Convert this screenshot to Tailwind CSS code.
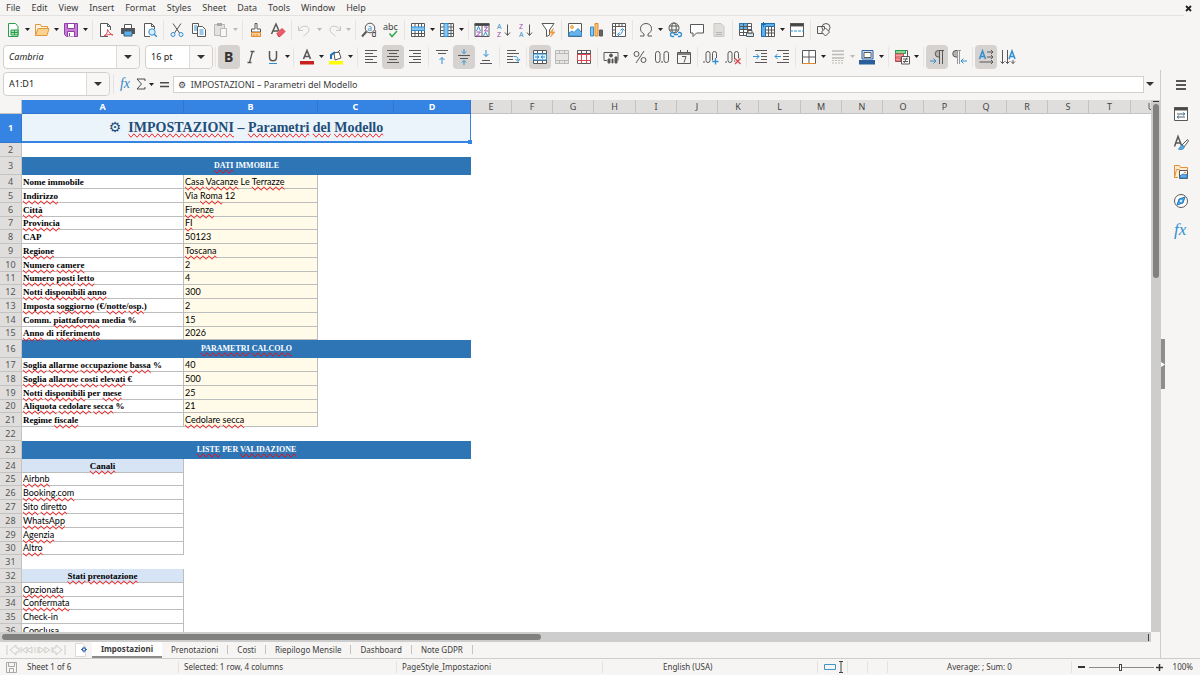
<!DOCTYPE html>
<html lang="en">
<head>
  <meta charset="UTF-8" />
  <meta name="viewport" content="width=device-width, initial-scale=1.0"/>
  <title>Impostazioni</title>
  <script src="https://cdn.jsdelivr.net/npm/@tailwindcss/browser@4"></script>
</head>
<body class="flex flex-col h-screen overflow-hidden bg-[#f6f5f3] text-[#3b3b3b] font-['Noto_Sans',sans-serif] text-[8px] leading-3">

  <!-- Menu bar -->
  <header class="flex items-center h-4 shrink-0 pr-4">
    <nav id="menu" class="flex items-center h-full grow border-b border-[#e3e2e0] pl-[6px] text-[9px] gap-[11px]"></nav>
    <button aria-label="Close document" class="w-0 flex justify-center"><svg class="w-[7px] h-[7px] shrink-0 ml-2" viewBox="0 0 7 7" fill="none" stroke="#222" stroke-width="1.8"><path d="M1 1l5 5M6 1l-5 5"/></svg></button>
  </header>

  <!-- Toolbars -->
  <div id="standard" class="flex items-center h-[27px] shrink-0 pl-[2px]"></div>
  <div class="flex items-center h-[27px] shrink-0 pl-[3px]">
    <div class="flex h-6 w-[137px] mr-[5px] bg-white border border-[#d2d0cd] rounded">
      <input aria-label="Font name" value="Cambria" class="grow min-w-0 w-0 pl-[5px] italic text-[9px] text-[#222] outline-none">
      <button aria-label="Font list" class="w-[23px] shrink-0 flex items-center justify-center bg-[#f8f7f6] border-l border-[#dddbd9] rounded-r"><svg class="w-2 h-1" viewBox="0 0 8 4"><path d="M0 0h8L4 4z" fill="#333"/></svg></button>
    </div>
    <div class="flex h-6 w-[68px] bg-white border border-[#d2d0cd] rounded">
      <input aria-label="Font size" value="16 pt" class="grow min-w-0 w-0 pl-[5px] text-[9px] text-[#222] outline-none">
      <button aria-label="Font size list" class="w-[23px] shrink-0 flex items-center justify-center bg-[#f8f7f6] border-l border-[#dddbd9] rounded-r"><svg class="w-2 h-1" viewBox="0 0 8 4"><path d="M0 0h8L4 4z" fill="#333"/></svg></button>
    </div>
    <div id="formatting" class="flex items-center"></div>
  </div>

  <div class="flex grow min-h-0">
    <main class="flex flex-col grow min-w-0 border-r border-[#cfcdcb]">
      <!-- Formula bar -->
      <div class="flex items-center h-[30px] shrink-0 pl-[3px] pb-[2px] pr-1">
        <div class="flex h-6 w-[107px] bg-white border border-[#d2d0cd] rounded">
          <input aria-label="Name box" value="A1:D1" class="grow min-w-0 w-0 pl-[5px] text-[9px] text-[#222] outline-none">
          <button aria-label="Named ranges" class="w-[23px] shrink-0 flex items-center justify-center bg-[#f8f7f6] border-l border-[#dddbd9] rounded-r"><svg class="w-2 h-1" viewBox="0 0 8 4"><path d="M0 0h8L4 4z" fill="#333"/></svg></button>
        </div>
        <div class="w-px h-5 bg-[#e3e2e0] ml-[3px]"></div>
        <button aria-label="Function wizard" class="w-[22px] text-[14px] italic text-[#2f86c9] font-['Liberation_Serif',serif]">fx</button>
        <button aria-label="Select function" class="flex items-center w-[22px] gap-[3px]">
          <svg class="w-[10px] h-3" viewBox="0 0 10 12" fill="none" stroke="#4a4a4a"><path d="M9 3V1H1l4.500 5L1 11h8V9"/></svg>
          <svg class="w-[5px] h-[3px]" viewBox="0 0 5 3"><path d="M0 0h5L2.500 3z" fill="#222"/></svg>
        </button>
        <button aria-label="Formula" class="flex items-center w-[15px] pl-[2px]"><svg class="w-[9px] h-[7px]" viewBox="0 0 9 7"><path d="M0 1h9v1.500H0zM0 4.800h9v1.500H0z" fill="#4a4a4a"/></svg></button>
        <input aria-label="Input line" value="⚙  IMPOSTAZIONI – Parametri del Modello" class="grow min-w-0 h-[17px] pl-1 bg-white border border-[#d2d0cd] text-[9px] outline-none">
        <button aria-label="Expand formula bar" class="w-3 flex justify-center"><svg class="w-2 h-1" viewBox="0 0 8 4"><path d="M0 0h8L4 4z" fill="#333"/></svg></button>
      </div>

      <!-- Cells -->
      <div class="flex grow min-h-0">
        <div class="grow min-w-0 overflow-hidden bg-white">
          <table class="w-[1172px] table-fixed border-separate border-spacing-0 text-black">
            <colgroup id="cols"><col class="w-[22px]"><col class="w-[162px]"><col class="w-[134px]"><col class="w-[76px]"><col class="w-[77px]"></colgroup>
            <thead><tr id="colHeads" class="h-[14px]"><td class="bg-[#f6f5f3] border-r border-b border-[#c4c3c1]"></td></tr></thead>
            <tbody id="rows"></tbody>
          </table>
        </div>
        <div class="flex flex-col items-center w-[9px] shrink-0 bg-[#cdcdcd]">
          <div class="w-[6px] h-px mt-px bg-[#333]"></div>
          <div class="w-[6px] h-[174px] mt-[2px] rounded-full bg-[#80807e]"></div>
        </div>
      </div>
      <div class="flex items-center h-[10px] shrink-0 mr-[9px] pl-[2px] pr-[2px] bg-[#cdcdcd]">
        <div class="w-[47%] h-[6px] rounded-full bg-[#80807e]"></div>
        <div class="w-px h-[7px] ml-auto bg-[#444]"></div>
      </div>

      <!-- Sheet tabs -->
      <div class="flex items-center h-4 shrink-0">
        <svg class="w-[60px] h-3 ml-[6px]" viewBox="0 0 60 12" fill="none" stroke="#cfcdca"><path d="M1 1v10M10 1L4 6l6 5V8h3V4h-3zM15 3v6M21 3l-5 3 5 3zM26 3l-5 3 5 3zM29 3v6M32 3v6M33 3l5 3-5 3zM39 3l5 3-5 3zM46 3v6M50 1l6 5-6 5V8h-3V4h3zM59 1v10"/></svg>
        <button aria-label="Add sheet" class="ml-2 mr-1"><svg class="w-[14px] h-[14px]" viewBox="0 0 14 14"><path d="M1.500.5h7l3 3v10h-10z" fill="#fff" stroke="#dcdad7"/><circle cx="10" cy="6.500" r="1.600" fill="none" stroke="#2b63ad" stroke-width="1.200"/><path d="M10 3.500v1M10 8.500v1M7 6.500h1M12 6.500h1" stroke="#2b63ad"/></svg></button>
        <button class="h-4 w-[70px] bg-white border-b-2 border-[#8c8b89] font-bold">Impostazioni</button>
        <div id="tabs" class="flex items-center mb-[2px]"></div>
      </div>
    </main>

    <!-- Sidebar -->
    <aside class="flex w-[39px] shrink-0">
      <div class="flex items-center w-1 h-[50px] mt-[269px] bg-[#8f8e8d]"><svg class="w-1 h-[5px]" viewBox="0 0 4 5"><path d="M0 0l4 2.500L0 5z" fill="#fff"/></svg></div>
      <div id="sidebar" class="flex flex-col items-center w-8 pt-[7px] gap-[13px]"></div>
    </aside>
  </div>

  <!-- Status bar -->
  <footer class="grid grid-cols-[178fr_218fr_206fr_215fr_30px_20px_20px_184fr_129px] items-center h-[17px] shrink-0 border-t border-[#cfcdcb] *:h-3">
    <div class="flex items-center pl-[6px] gap-[10px]"><svg class="w-[11px] h-[11px]" viewBox="0 0 11 11" fill="none" stroke="#a9a8a6"><path d="M.5.5h10v10H.5zM2.500.5v4h6v-4M3.500 10.500v-4h4v4"/></svg>Sheet 1 of 6</div>
    <div class="border-l border-[#e3e2e0] pl-[5px]">Selected: 1 row, 4 columns</div>
    <div class="border-l border-[#e3e2e0] pl-[5px]">PageStyle_Impostazioni</div>
    <div class="border-l border-[#e3e2e0] pl-[60px]">English (USA)</div>
    <div class="flex items-center border-l border-[#e3e2e0] pl-[6px]"><svg class="w-5 h-3" viewBox="0 0 20 12" fill="none"><path d="M.5 3.500h11v5H.5z" stroke="#3f93c6"/><path d="M15 .5h4M15 11.500h4M17 1v10" stroke="#444"/></svg></div>
    <div class="border-l border-[#e3e2e0]"></div>
    <div class="border-l border-[#e3e2e0]"></div>
    <div class="border-l border-[#e3e2e0] text-center">Average: ; Sum: 0</div>
    <div class="flex items-center border-l border-[#e3e2e0] pl-[6px]">
      <button aria-label="Zoom out" class="w-[7px] h-[2px] bg-[#333]"></button>
      <input type="range" min="0" max="100" value="48" aria-label="Zoom" class="appearance-none w-[65px] h-2 ml-1 bg-transparent [&::-webkit-slider-runnable-track]:h-px [&::-webkit-slider-runnable-track]:bg-[#8a8a8a] [&::-webkit-slider-thumb]:appearance-none [&::-webkit-slider-thumb]:w-[3px] [&::-webkit-slider-thumb]:h-[7px] [&::-webkit-slider-thumb]:-mt-[3px] [&::-webkit-slider-thumb]:border [&::-webkit-slider-thumb]:border-[#444] [&::-webkit-slider-thumb]:bg-white">
      <button aria-label="Zoom in" class="ml-[2px]"><svg class="w-[7px] h-[7px]" viewBox="0 0 7 7"><path d="M0 3.500h7M3.500 0v7" stroke="#333" stroke-width="1.500"/></svg></button>
      <button class="ml-auto mr-[7px]">100%</button>
    </div>
  </footer>

  <script>
    // 16x16 icon bodies, default stroke comes from the svg element
    const icons = {
      "New": '<path d="M3.500 1.500h7l2.500 3v10H3.500z" fill="#fff" stroke="#2a9d4a"/><path d="M6 8h7v5H6zM6 10.500h7M9.500 8v5" fill="#a9e0b5" stroke="#2a9d4a"/>',
      "Open": '<path d="M1.500 13.500v-11h5l1 2h6v3" fill="#fff3dc" stroke="#e0983c"/><path d="M1.500 13.500L4 6.500h11l-2 7z" fill="#fbd38f" stroke="#e0983c"/>',
      "Save": '<path d="M1.500 1.500h13v13h-11l-2-2z" fill="#c77fd6" stroke="#8f3fa5"/><path d="M4.500 1.500h7v5h-7zM4.500 14.500v-5h7v5" fill="#fff" stroke="#8f3fa5"/><path d="M6.500 11v3" stroke="#8f3fa5"/>',
      "Export PDF": '<path d="M10 14.500H2.500v-13h7l3 3V8" fill="#fff"/><path d="M9.500 1.500v3h3"/><path d="M6 14c2-1 4-4 3.500-6.500C11 11 13 12 15 13c-3-1-6-.5-9 1z" stroke="#e0454f"/>',
      "Print": '<path d="M4.500 6V2.500h7V6" fill="#fff"/><path d="M1 6h14v6H1z" fill="#555" stroke="none"/><path d="M4 9h8v5H4z" fill="#5fb0ea" stroke="#37607e"/>',
      "Print Preview": '<path d="M8 14.500H2.500v-13h7l3 3V7" fill="#fff"/><path d="M9.500 1.500v3h3"/><circle cx="10" cy="10" r="3.200" fill="#d8ecfa" stroke="#2f8fd0"/><path d="M12.300 12.300l2.500 2.500" stroke="#2f8fd0" stroke-width="1.500"/>',
      "Cut": '<path d="M4 1.500l6.500 9.500M12 1.500L5.500 11"/><circle cx="4" cy="12.500" r="2" stroke="#2f8fd0"/><circle cx="12" cy="12.500" r="2" stroke="#2f8fd0"/>',
      "Copy": '<path d="M6 11.500H1.500v-10h6V4" fill="#fff"/><path d="M6.500 4.500h5l3 3v7h-8z" fill="#fff"/><path d="M3 4h3M3 6h3M3 8h3M8.500 8h4M8.500 10h4M8.500 12h4" stroke="#2f8fd0"/>',
      "Paste": '<path d="M8 13.500H1.500v-11h10V6" fill="#e4e2e0" stroke="#bbb9b6"/><path d="M4 1h5v3H4z" fill="#aaa8a5" stroke="none"/><path d="M7.500 6.500h6v8h-6z" fill="#f8f7f6" stroke="#bbb9b6"/>',
      "Clone Formatting": '<path d="M7 1.500h2V7h3.500v3h-9V7H7z" fill="#fff"/><path d="M3.500 10.500h9v4h-9z" fill="#fbd09a" stroke="#e58a2b"/><path d="M6 12v2M9 12v2" stroke="#e58a2b"/>',
      "Clear Formatting": '<path d="M1.500 12L6 2l3 7M3 9h5" stroke-width="1.500"/><path d="M7 11.500l5-5 3 3-5 5H8.500z" fill="#ee5c67" stroke="#d33a48"/>',
      "Undo": '<path d="M1.500 4v4.500H6M2 8c2-5 10-5 10-.500 0 3-3 4.500-5.500 6.500" stroke="#c9c7c4"/>',
      "Redo": '<path d="M14.500 4v4.500H10M14 8C12 3 4 3 4 7.500c0 3 3 4.500 5.500 6.500" stroke="#c9c7c4"/>',
      "Find": '<circle cx="9" cy="6" r="4.800"/><path d="M5.500 9.500L1 14.500" stroke-width="2"/><text x="6.500" y="8.500" font-size="8" fill="#2f8fd0" stroke="none">a</text><text x="10.500" y="15" font-size="8" fill="#333" stroke="none">d</text>',
      "Spelling": '<text x="0" y="8" font-size="9" fill="#444" stroke="none">abc</text><path d="M6.500 11.500l2.500 3 5-5.500" stroke="#33a852" stroke-width="1.500"/>',
      "Row": '<path d="M1.500 1.500h13v13h-13z" fill="#fff"/><path d="M1.500 11.500h13M5 1.500v13M8.500 1.500v13M11.500 1.500v13"/><path d="M1.500 5h13v3.500h-13z" fill="#8cc6f0" stroke="#2f8fd0"/>',
      "Column": '<path d="M1.500 1.500h13v13h-13z" fill="#fff"/><path d="M1.500 5h13M1.500 8.500h13M1.500 11.500h13M12 1.500v13"/><path d="M5 1.500h4v13H5z" fill="#8cc6f0" stroke="#2f8fd0"/>',
      "Sort": '<path d="M1 1.500h14v13H1z" fill="#fff"/><path d="M1 1.500h14v2H1z" fill="#444"/><path d="M8 3v12"/><path d="M2.500 9L4.500 4.500 6.500 9M9.500 14l2-4 2 4" stroke="#2f8fd0"/><path d="M10 5h3.500l-3 4h3.500M2.500 10h4l-4 4h4" stroke="#a349b8"/>',
      "Sort Ascending": '<text x="1" y="7" font-size="7" fill="#2f8fd0" stroke="none">A</text><text x="1" y="15" font-size="7" fill="#a349b8" stroke="none">Z</text><path d="M11.500 2.500V13M9 10.500l2.500 3 2.500-3"/>',
      "Sort Descending": '<text x="1" y="7" font-size="7" fill="#a349b8" stroke="none">Z</text><text x="1" y="15" font-size="7" fill="#2f8fd0" stroke="none">A</text><path d="M11.500 2.500V13M9 10.500l2.500 3 2.500-3"/>',
      "AutoFilter": '<path d="M2 1.500h12L9.500 8v5L6.500 14.500V8z" fill="#fff"/><path d="M13.500 6.500L9.500 11h3l-2 4 4.500-5h-3z" fill="#f6a34a" stroke="#e58a2b" stroke-width=".6"/>',
      "Image": '<path d="M1.500 1.500h13v13h-13z" fill="#fff"/><circle cx="5" cy="5" r="1.500" fill="#fbc27a" stroke="#e58a2b" stroke-width=".7"/><path d="M2 13v-2l3-2 2 1.500L11 6.500l3.500 4V14H2z" fill="#69b3ea" stroke="#2f8fd0"/>',
      "Chart": '<path d="M1.500 5h3v9h-3z" fill="#8cc6f0" stroke="#2f8fd0"/><path d="M6 1.500h3V14H6z" fill="#fbc27a" stroke="#e58a2b"/><path d="M10.500 8h3v6h-3z" fill="#666"/>',
      "Pivot Table": '<path d="M1.500 1.500h13v13h-13z" fill="#fff"/><path d="M4.500 1.500v13M1.500 4.500h13M8 1.500v3M11 1.500v3M1.500 8h3M1.500 11h3"/><path d="M7.500 12.500c3 0 4-2 4-5M9.500 8.500l2-2 2 2M8.500 10.500l-2 2 2 2" stroke="#2f8fd0"/>',
      "Special Character": '<path d="M2 14h4v-2C3.500 10.500 2.500 9 2.500 6.500 2.500 3.500 5 1.500 8 1.500s5.500 2 5.500 5c0 2.500-1 4-3.500 5.500v2h4"/>',
      "Hyperlink": '<circle cx="7" cy="6" r="5"/><ellipse cx="7" cy="6" rx="2.200" ry="5"/><path d="M2.500 4h9M2.500 8h9"/><path d="M7 10.500H5.500a2 2 0 000 4H7M11 10.500h1.500a2 2 0 010 4H11M7 12.500h4" stroke="#2f8fd0" stroke-width="1.300"/>',
      "Comment": '<path d="M1.500 2.500h13v8.500H7.500L4 14.500V11H1.500z" fill="#fff"/>',
      "Headers and Footers": '<path d="M3 1.500h7l3 3v10H3z" fill="#e0dedb" stroke="#c9c7c4"/><path d="M5 10.500h6M5 12.500h6" stroke="#b7b5b2"/>',
      "Print Area": '<path d="M1.500 1.500h12v12h-12z" fill="#fff"/><path d="M1.500 1.500h8v6h-8z" fill="#5fb0ea" stroke="#2b7dbb"/><path d="M1.500 4.500h12M5.500 1.500v12M9.500 1.500v12M1.500 7.500h12M1.500 10.500h12"/><path d="M8.500 11h7v3.500h-7z" fill="#cfe6f7"/><path d="M10 8.500h4V11h-4z" fill="#fff"/>',
      "Freeze": '<path d="M1.500 1.500h13v13h-13z" fill="#fff"/><path d="M1.500 1.500h13v3h-9v10h-4z" fill="#5fb0ea" stroke="#1f6fae"/><path d="M8.500 4.500v10M11.500 4.500v10M5.500 8h9M5.500 11h9"/><path d="M3.500 0v5M1 2.500h5" stroke="#1f6fae"/>',
      "Split Window": '<path d="M1.500 1.500h13v13h-13z" fill="#fff"/><path d="M1.500 1.500h13v2.500h-13z" fill="#444"/><path d="M1 9h14" stroke="#2f8fd0" stroke-dasharray="3 1"/>',
      "Draw Functions": '<path d="M1.500 4.500h7v7h-7z"/><circle cx="10" cy="5.500" r="4"/><path d="M9.500 6l4 4-4 4-4-4z" fill="#f6f5f3"/>',
      "Bold": '<text x="3" y="13" font-size="14" font-weight="700" fill="#333" stroke="none">B</text>',
      "Italic": '<path d="M7.500 2.500h4M4.500 13.500h4M9.500 2.500l-3 11" stroke-width="1.300"/>',
      "Underline": '<path d="M4.500 2v6c0 5 7 5 7 0V2" stroke-width="1.500"/><path d="M4 14.500h8" stroke="#2f8fd0"/>',
      "Font Color": '<path d="M4.500 10L8 1.500 11.500 10M6 7.500h4" stroke-width="1.600"/><path d="M1 12h14v3.500H1z" fill="#c9211e" stroke="none"/>',
      "Highlighting": '<path d="M6 4l5-1 2 6-6 2z" fill="#fff"/><path d="M3 10V6l4-3" stroke="#1f6fae" stroke-width="2"/><path d="M9 4l3-3"/><path d="M1 12h14v3.500H1z" fill="#ffff00" stroke="none"/>',
      "Align Left": '<path d="M2 1.500h12M2 4.500h8M2 7.500h12M2 10.500h8M2 13.500h12"/>',
      "Align Center": '<path d="M2 1.500h12M4 4.500h8M2 7.500h12M4 10.500h8M2 13.500h12"/>',
      "Align Right": '<path d="M2 1.500h12M6 4.500h8M2 7.500h12M6 10.500h8M2 13.500h12"/>',
      "Align Top": '<path d="M2 1.500h12M4 4.500h8"/><path d="M8 15V8.500M5.500 11L8 8.500l2.500 2.500" stroke="#2f8fd0"/>',
      "Center Vertically": '<path d="M2 6.500h12M4 9.500h8"/><path d="M8 0v4.500M6 2.500l2 2 2-2M8 16v-4.500M6 13.500l2-2 2 2" stroke="#2f8fd0"/>',
      "Align Bottom": '<path d="M2 14.500h12M4 11.500h8"/><path d="M8 1v6.500M5.500 5L8 7.500 10.500 5" stroke="#2f8fd0"/>',
      "Wrap Text": '<path d="M2 1.500h9M2 4.500h12M2 7.500h6M2 10.500h6M2 13.500h12"/><path d="M8.500 7.500h2c2 0 2.500 1.500 2.500 4M10.500 10l2.500 2.500L15 10" stroke="#2f8fd0"/>',
      "Merge and Center": '<path d="M1.500 1.500h13v13h-13z" fill="#fff"/><path d="M1.500 4.500h13M1.500 11.500h13M5.500 1.500v3M10.500 1.500v3M5.500 11.500v3M10.500 11.500v3"/><path d="M1.500 5h13v6h-13z" fill="#e3f1fb" stroke="#2f8fd0"/><path d="M3 8h4M9 8h4M5 6.500L7 8l-2 1.500M11 6.500L9 8l2 1.500" stroke="#2f8fd0"/>',
      "Merge Cells": '<path d="M1.500 1.500h13v13h-13z" fill="#e8e6e4" stroke="#bbb9b6"/><path d="M1.500 4.500h13M1.500 11.500h13M5.500 1.500v3M10.500 1.500v3M5.500 11.500v3M10.500 11.500v3" stroke="#bbb9b6"/>',
      "Unmerge Cells": '<path d="M1.500 1.500h13v13h-13z" fill="#fff"/><path d="M1.500 4.500h13M5.500 1.500v3M10.500 1.500v3"/><path d="M1.500 5.500h13v6h-13zM5.500 5.500v9M10.500 5.500v9" stroke="#dd4b50"/>',
      "Currency": '<path d="M1 3.500h14v8M1 3.500v8h3"/><circle cx="8" cy="6.500" r="1.500" fill="#555"/><path d="M5 10h2v4H5zM9 10h1v4H9zM12 8h2v6h-2z" fill="#555"/>',
      "Percent": '<circle cx="4.500" cy="5" r="2.500"/><circle cx="11.500" cy="11" r="2.500"/><path d="M12 2L4 14"/>',
      "Number": '<rect x="1.500" y="2.500" width="4.500" height="11" rx="2.200"/><path d="M8 12v2"/><rect x="10" y="2.500" width="4.500" height="11" rx="2.200"/>',
      "Date": '<path d="M1.500 3.500h13v11h-13zM4.500 1v3M11.500 1v3"/><path d="M1.500 5h13" stroke-width="1.500"/><path d="M6 7.500h4l-2 6"/>',
      "Add Decimal": '<path d="M1 12v2"/><rect x="3" y="2.500" width="4" height="11" rx="2"/><rect x="9.500" y="2.500" width="4" height="11" rx="2"/><path d="M12.500 9v6.500M9.500 12.500h6" stroke="#f6f5f3" stroke-width="3"/><path d="M12.500 9v6.500M9.500 12.500h6" stroke="#2f8fd0" stroke-width="1.300"/>',
      "Delete Decimal": '<path d="M1 12v2"/><rect x="3" y="2.500" width="4" height="11" rx="2"/><rect x="9.500" y="2.500" width="4" height="11" rx="2"/><path d="M10 9.500l5.500 5.500M15.500 9.500L10 15" stroke="#f6f5f3" stroke-width="3"/><path d="M10 9.500l5.500 5.500M15.500 9.500L10 15" stroke="#e0454f" stroke-width="1.300"/>',
      "Increase Indent": '<path d="M3 1.500h12M9 4.500h6M9 7.500h6M9 10.500h6M3 13.500h12"/><path d="M1 7.500h6M4.500 5L7 7.500 4.500 10" stroke="#2f8fd0"/>',
      "Decrease Indent": '<path d="M3 1.500h12M9 4.500h6M9 7.500h6M9 10.500h6M3 13.500h12"/><path d="M1 7.500h6M3.500 5L1 7.500 3.500 10" stroke="#2f8fd0"/>',
      "Borders": '<path d="M1.500 1.500h13v13h-13zM8 1.500v13M1.500 8h13" fill="#fff"/><path d="M1.500 14.500h13" stroke="#e58a2b"/>',
      "Border Style": '<path d="M2 2h12M2 5.500h12M2 9h12" stroke="#bdbbb8" stroke-width="1.500"/><path d="M2 11.500h12M2 14h12" stroke="#bdbbb8" stroke-dasharray="2 1"/>',
      "Border Color": '<path d="M3 1.500h11v8.500H3z" fill="#cfe2f3" stroke="#2b62a6"/><path d="M5 3.500h7v5H5z" fill="#fff"/><path d="M0 11h16v4.500H0z" fill="#2a6099" stroke="none"/>',
      "Conditional": '<path d="M1.500 1.500h12v11h-12z" fill="#fff"/><path d="M1.500 1.500h10v3h-10z" fill="#8bd59a" stroke="#2a9d4a"/><path d="M1.500 5h8v3h-8zM1.500 9h5v3h-5z" fill="#f2a0a0" stroke="#dd4b50"/><path d="M7.500 7.500h8v7.500h-8z" fill="#fff"/><path d="M9 10h5M9 12.500h5M13 8.500l-3 5.500"/>',
      "Left-To-Right": '<path d="M10.500 1.500h-1a3 3 0 000 6.500h1z" fill="#b5b3b0"/><path d="M15 1.500h-5M10.500 1.500V15M13.500 1.500V15"/><path d="M1 12h6M4.500 9.500L7 12l-2.500 2.500" stroke="#2f8fd0"/>',
      "Right-To-Left": '<path d="M6.500 1.500H5A3 3 0 005 8h1.500z" fill="#b5b3b0"/><path d="M10 1.500H6M6.500 1.500V15M8.500 1.500V15" stroke="#999"/><path d="M10 12h6M12.500 9.500L10 12l2.500 2.500" stroke="#2f8fd0"/>',
      "Text Left To Right": '<path d="M1.500 10L4.500 2l3 8M2.500 7.500h4" stroke="#2f8fd0" stroke-width="1.500"/><path d="M9 3h6M13 1l2 2-2 2M9 8h6M13 6l2 2-2 2M1.500 13h13.500M13 11l2 2-2 2"/>',
      "Text Top To Bottom": '<path d="M9 10l3-8 3 8M10 7.500h4" stroke="#2f8fd0" stroke-width="1.500"/><path d="M2.500 1v13.500M.5 12.500l2 2 2-2M7.500 1v13.500M5.500 12.500l2 2 2-2M13 11v3.500M11 12.500l2 2 2-2"/>',
      "Sidebar Settings": '<path d="M3 4h10M3 8h10M3 12h10" stroke="#222" stroke-width="1.500"/>',
      "Properties": '<path d="M1.500 1.500h13v13h-13z" fill="#fff"/><path d="M1.500 1.500h13V4h-13z" fill="#444"/><path d="M4 8h8M4 11h8"/><path d="M10 6.500L12 8l-2 1.500M6 9.500L4 11l2 1.500" stroke="#2f8fd0"/>',
      "Styles": '<path d="M1.500 11.500L5 1.500l3.500 9M2.500 8h5" stroke-width="1.500"/><path d="M14.500 4.500L9 10l2 2 4.500-6z" fill="#fff"/><path d="M9.500 10c-2 0-2 3-4 4 2 1 6 .5 5.500-2.500z" fill="#5fb0ea" stroke="#2b7dbb"/>',
      "Gallery": '<path d="M5 13.500H1.500v-12h5l1 2h7V6" fill="#fdebcf" stroke="#e0913a"/><path d="M1.500 13.500l2-8h3" stroke="#e0913a"/><path d="M6.500 6.500h8v8h-8z" fill="#fff"/><path d="M7 14v-2l3-2 2 1 2-1v4z" fill="#5fb0ea" stroke="#2b7dbb"/><circle cx="12" cy="8.500" r=".6" fill="#e58a2b" stroke="#e58a2b"/>',
      "Navigator": '<circle cx="8" cy="8" r="6.500" fill="#fff"/><path d="M12 4l-2 6-6 2 2-6z" fill="#4ba3e3" stroke="#2b7dbb"/><circle cx="8" cy="8" r="1" fill="#fff" stroke="none"/>',
      "Functions": '<text x="1" y="13" font-size="17" font-style="italic" font-family="Liberation Serif, serif" fill="#2f8fd0" stroke="none">fx</text>',
    };
    const svg = name => `<svg class="w-4 h-4 overflow-visible" viewBox="0 0 16 16" fill="none" stroke="#585858">${icons[name]}</svg>`;

    const caret = color => `<button aria-label="More" class="w-[7px] h-[22px] flex items-center justify-center"><svg class="w-[5px] h-[3px]" viewBox="0 0 5 3"><path d="M0 0h5L2.500 3z" fill="${color}"/></svg></button>`;
    const pressed = ["Bold", "Align Center", "Center Vertically", "Merge and Center", "Left-To-Right", "Text Left To Right"];

    // "|" separator, "||" separator after a drop-down, "v" drop-down arrow, "x" disabled arrow
    function toolbar(id, items) {
      document.getElementById(id).innerHTML = items.map(item => {
        if (item === "|") return '<span class="w-[5px] h-5 flex justify-center"><span class="w-px bg-[#e6e5e3]"></span></span>';
        if (item === "||") return '<span class="w-[6px] h-5 flex justify-center"><span class="w-px bg-[#e6e5e3]"></span></span>';
        if (item === "v") return caret("#222");
        if (item === "x") return caret("#bbb9b6");
        const bg = pressed.includes(item) ? "bg-[#d5d2cf]" : "";
        return `<button aria-label="${item}" class="w-[22px] h-6 rounded flex items-center justify-center ${bg}">${svg(item)}</button>`;
      }).join("");
    }

    toolbar("standard", ["New", "v", "Open", "v", "Save", "v", "||", "Export PDF", "Print", "Print Preview", "|",
      "Cut", "Copy", "Paste", "x", "||", "Clone Formatting", "Clear Formatting", "|", "Undo", "x", "Redo", "x", "||",
      "Find", "Spelling", "|", "Row", "v", "Column", "v", "||", "Sort", "Sort Ascending", "Sort Descending", "AutoFilter", "|",
      "Image", "Chart", "Pivot Table", "|", "Special Character", "v", "Hyperlink", "Comment", "Headers and Footers", "|",
      "Print Area", "Freeze", "v", "Split Window", "|", "Draw Functions"]);
    toolbar("formatting", ["|", "Bold", "Italic", "Underline", "v", "|", "Font Color", "v", "Highlighting", "v", "||",
      "Align Left", "Align Center", "Align Right", "|", "Align Top", "Center Vertically", "Align Bottom", "|", "Wrap Text", "|",
      "Merge and Center", "Merge Cells", "Unmerge Cells", "|", "Currency", "v", "Percent", "Number", "Date", "|",
      "Add Decimal", "Delete Decimal", "|", "Increase Indent", "Decrease Indent", "|", "Borders", "v", "Border Style", "x",
      "Border Color", "v", "||", "Conditional", "v", "||", "Left-To-Right", "Right-To-Left", "|", "Text Left To Right", "Text Top To Bottom"]);

    document.getElementById("menu").innerHTML = ["File", "Edit", "View", "Insert", "Format", "Styles", "Sheet", "Data", "Tools", "Window", "Help"]
      .map(m => `<button>${m}</button>`).join("");
    document.getElementById("tabs").innerHTML = ["Prenotazioni", "Costi", "Riepilogo Mensile", "Dashboard", "Note GDPR"]
      .map(t => `<button class="px-[9px] h-[9px] leading-[9px] border-r border-[#c4c3c1]">${t}</button>`).join("");
    document.getElementById("sidebar").innerHTML = ["Sidebar Settings", "Properties", "Styles", "Gallery", "Navigator", "Functions"]
      .map(s => `<button aria-label="${s}">${svg(s)}</button>`).join("");

    // Column headers
    const heads = document.getElementById("colHeads");
    const cols = document.getElementById("cols");
    [..."ABCDEFGHIJKLMNOPQRSTU"].forEach((c, i) => {
      const state = i < 4 ? "bg-[#3584e4] border-[#2f76cc] text-white font-bold" : "bg-[#dfdedc] border-[#c4c3c1] text-[#444] font-normal";
      heads.innerHTML += `<th class="p-0 border-r border-b text-[9px] leading-3 ${state}">${c}</th>`;
      if (i > 3) cols.innerHTML += `<col class="${i % 4 === 3 ? "w-[42px]" : "w-[41px]"}">`;
    });

    // [kind, height, label, value]; words between asterisks fail the spell check
    const rows = [
      ["title", 29, "*IMPOSTAZIONI* – *Parametri* *del* *Modello*"],
      ["blank", 14],
      ["band", 18, "*DATI* IMMOBILE"],
      ["pair", 14, "Nome immobile", "*Casa* *Vacanze* Le *Terrazze*"],
      ["pair", 14, "*Indirizzo*", "Via *Roma* 12"],
      ["pair", 14, "*Città*", "*Firenze*"],
      ["pair", 13, "*Provincia*", "*FI*"],
      ["pair", 14, "CAP", "50123"],
      ["pair", 14, "*Regione*", "*Toscana*"],
      ["pair", 14, "*Numero* *camere*", "2"],
      ["pair", 13, "*Numero* *posti* *letto*", "4"],
      ["pair", 14, "*Notti* *disponibili* *anno*", "300"],
      ["pair", 14, "*Imposta* *soggiorno* (€/*notte*/*osp.*)", "2"],
      ["pair", 14, "Comm. *piattaforma* media %", "15"],
      ["pair", 13, "*Anno* di *riferimento*", "2026"],
      ["band", 18, "*PARAMETRI* *CALCOLO*"],
      ["pair", 14, "*Soglia* *allarme* *occupazione* *bassa* %", "40"],
      ["pair", 14, "*Soglia* *allarme* *costi* *elevati* €", "500"],
      ["pair", 14, "*Notti* *disponibili* per *mese*", "25"],
      ["pair", 13, "*Aliquota* *cedolare* *secca* %", "21"],
      ["pair", 14, "Regime *fiscale*", "*Cedolare* *secca*"],
      ["blank", 14],
      ["band", 18, "*LISTE* PER *VALIDAZIONE*"],
      ["head", 14, "*Canali*"],
      ["item", 13, "*Airbnb*"],
      ["item", 14, "*Booking.com*"],
      ["item", 14, "*Sito* *diretto*"],
      ["item", 14, "*WhatsApp*"],
      ["item", 14, "*Agenzia*"],
      ["item", 13, "*Altro*"],
      ["blank", 14],
      ["head", 14, "*Stati* *prenotazione*"],
      ["item", 14, "*Opzionata*"],
      ["item", 13, "*Confermata*"],
      ["item", 14, "Check-in"],
      ["item", 14, "*Conclusa*"],
    ];
    const spell = t => t.replace(/\*(.+?)\*/g, '<span class="[text-decoration-line:spelling-error]">$1</span>');

    const cells = {
      title: t => `<td colspan="4" class="p-0 text-center align-middle bg-[#ebf3fb] border-r border-b-2 border-[#3584e4] text-[#1f4e79] font-bold font-['Liberation_Serif',serif] text-[14px] leading-5 relative"><span class="mr-[7px] font-normal font-['DejaVu_Sans',sans-serif]">⚙</span>${spell(t)}<span class="absolute -right-[2px] -bottom-[3px] w-[4px] h-[4px] bg-[#3584e4]"></span></td>`,
      band: t => `<td colspan="4" class="p-0 text-center bg-[#2e75b6] text-white font-bold font-['Liberation_Serif',serif] text-[8px] leading-3">${spell(t)}</td>`,
      pair: (a, b) => `<td class="p-0 pl-px border-r border-b border-[#bdbdbd] font-bold font-['Liberation_Serif',serif] text-[9px] leading-3 whitespace-nowrap">${spell(a)}</td>
        <td class="p-0 pl-px border-r border-b border-[#bdbdbd] bg-[#fffbe8] font-[Lato,sans-serif] text-[9px] leading-3 whitespace-nowrap">${spell(b)}</td>`,
      head: t => `<td class="p-0 text-center border-r border-b border-[#bdbdbd] bg-[#d6e4f5] font-bold font-['Liberation_Serif',serif] text-[9px] leading-3">${spell(t)}</td>`,
      item: t => `<td class="p-0 pl-px border-r border-b border-[#bdbdbd] font-[Lato,sans-serif] text-[9px] leading-3">${spell(t)}</td>`,
      blank: () => "",
    };
    document.getElementById("rows").innerHTML = rows.map(([kind, height, a, b], i) => {
      const head = i === 0 ? "bg-[#3584e4] border-[#2f76cc] text-white font-bold" : "bg-[#dfdedc] border-[#c4c3c1] text-[#555] font-normal";
      return `<tr style="height:${height}px"><th class="p-0 border-r border-b text-[9px] leading-3 ${head}">${i + 1}</th>${cells[kind](a, b)}</tr>`;
    }).join("");
  </script>
</body>
</html>
